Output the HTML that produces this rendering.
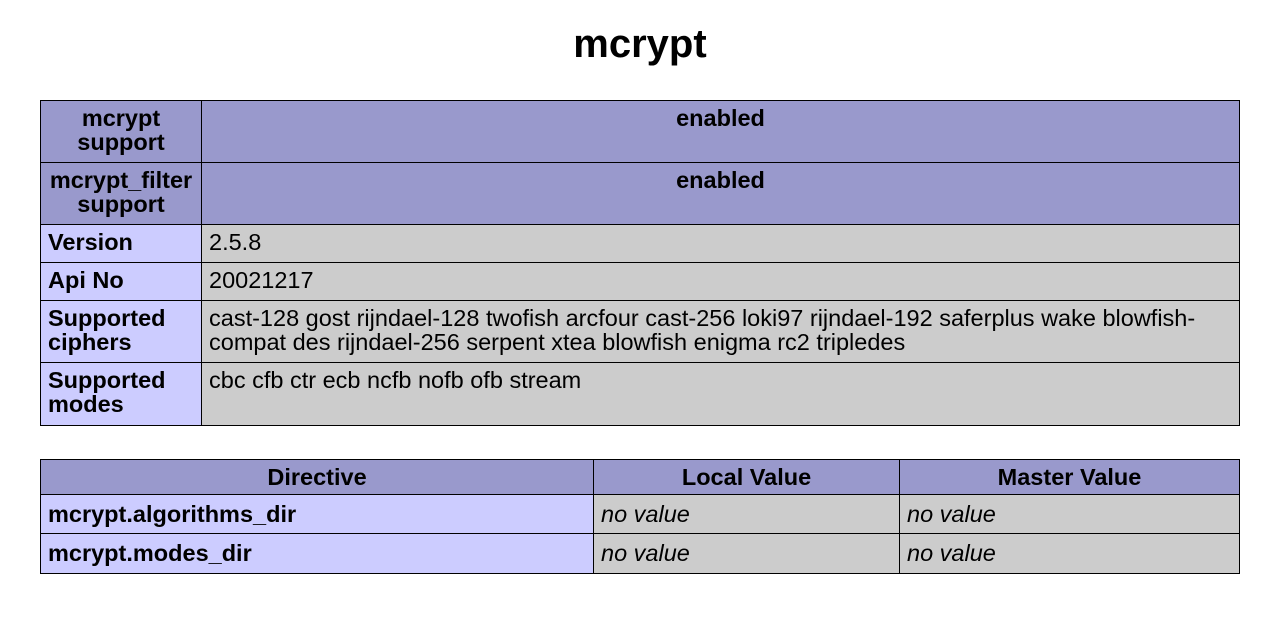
<!DOCTYPE html>
<html><head><meta charset="utf-8"><style>
body{margin:0;background:#fff;font-family:"Liberation Sans",Arial,sans-serif;color:#000;}
h1{margin:0;position:absolute;top:20px;left:0;width:1280px;text-align:center;font-size:40px;line-height:48px;font-weight:bold;}
table{position:absolute;left:40px;width:1200px;border-collapse:collapse;table-layout:fixed;}
td,th{border:1px solid #000;font-size:23.5px;line-height:24px;padding:5px 7px;vertical-align:top;box-sizing:border-box;}
th{background:#9999cc;text-align:center;font-weight:bold;padding-top:5px;}
.h{background:#9999cc;text-align:center;font-weight:bold;}
.e{background:#ccccff;font-weight:bold;}
.v{background:#cccccc;}
.t2 td{padding-top:7px;}
i{font-style:italic;}
</style></head><body>
<h1>mcrypt</h1>
<table style="top:100px">
<col style="width:161px"><col>
<tr style="height:62px"><td class="h">mcrypt support</td><td class="h">enabled</td></tr>
<tr style="height:62px"><td class="h">mcrypt_filter support</td><td class="h">enabled</td></tr>
<tr style="height:38px"><td class="e">Version</td><td class="v">2.5.8</td></tr>
<tr style="height:38px"><td class="e">Api No</td><td class="v">20021217</td></tr>
<tr style="height:62px"><td class="e">Supported ciphers</td><td class="v">cast-128 gost rijndael-128 twofish arcfour cast-256 loki97 rijndael-192 saferplus wake blowfish-compat des rijndael-256 serpent xtea blowfish enigma rc2 tripledes</td></tr>
<tr style="height:63px"><td class="e">Supported modes</td><td class="v">cbc cfb ctr ecb ncfb nofb ofb stream</td></tr>
</table>
<table class="t2" style="top:459px">
<col style="width:553px"><col style="width:306px"><col>
<tr style="height:35px"><th>Directive</th><th>Local Value</th><th>Master Value</th></tr>
<tr style="height:39px"><td class="e">mcrypt.algorithms_dir</td><td class="v"><i>no value</i></td><td class="v"><i>no value</i></td></tr>
<tr style="height:40px"><td class="e">mcrypt.modes_dir</td><td class="v"><i>no value</i></td><td class="v"><i>no value</i></td></tr>
</table>
</body></html>
